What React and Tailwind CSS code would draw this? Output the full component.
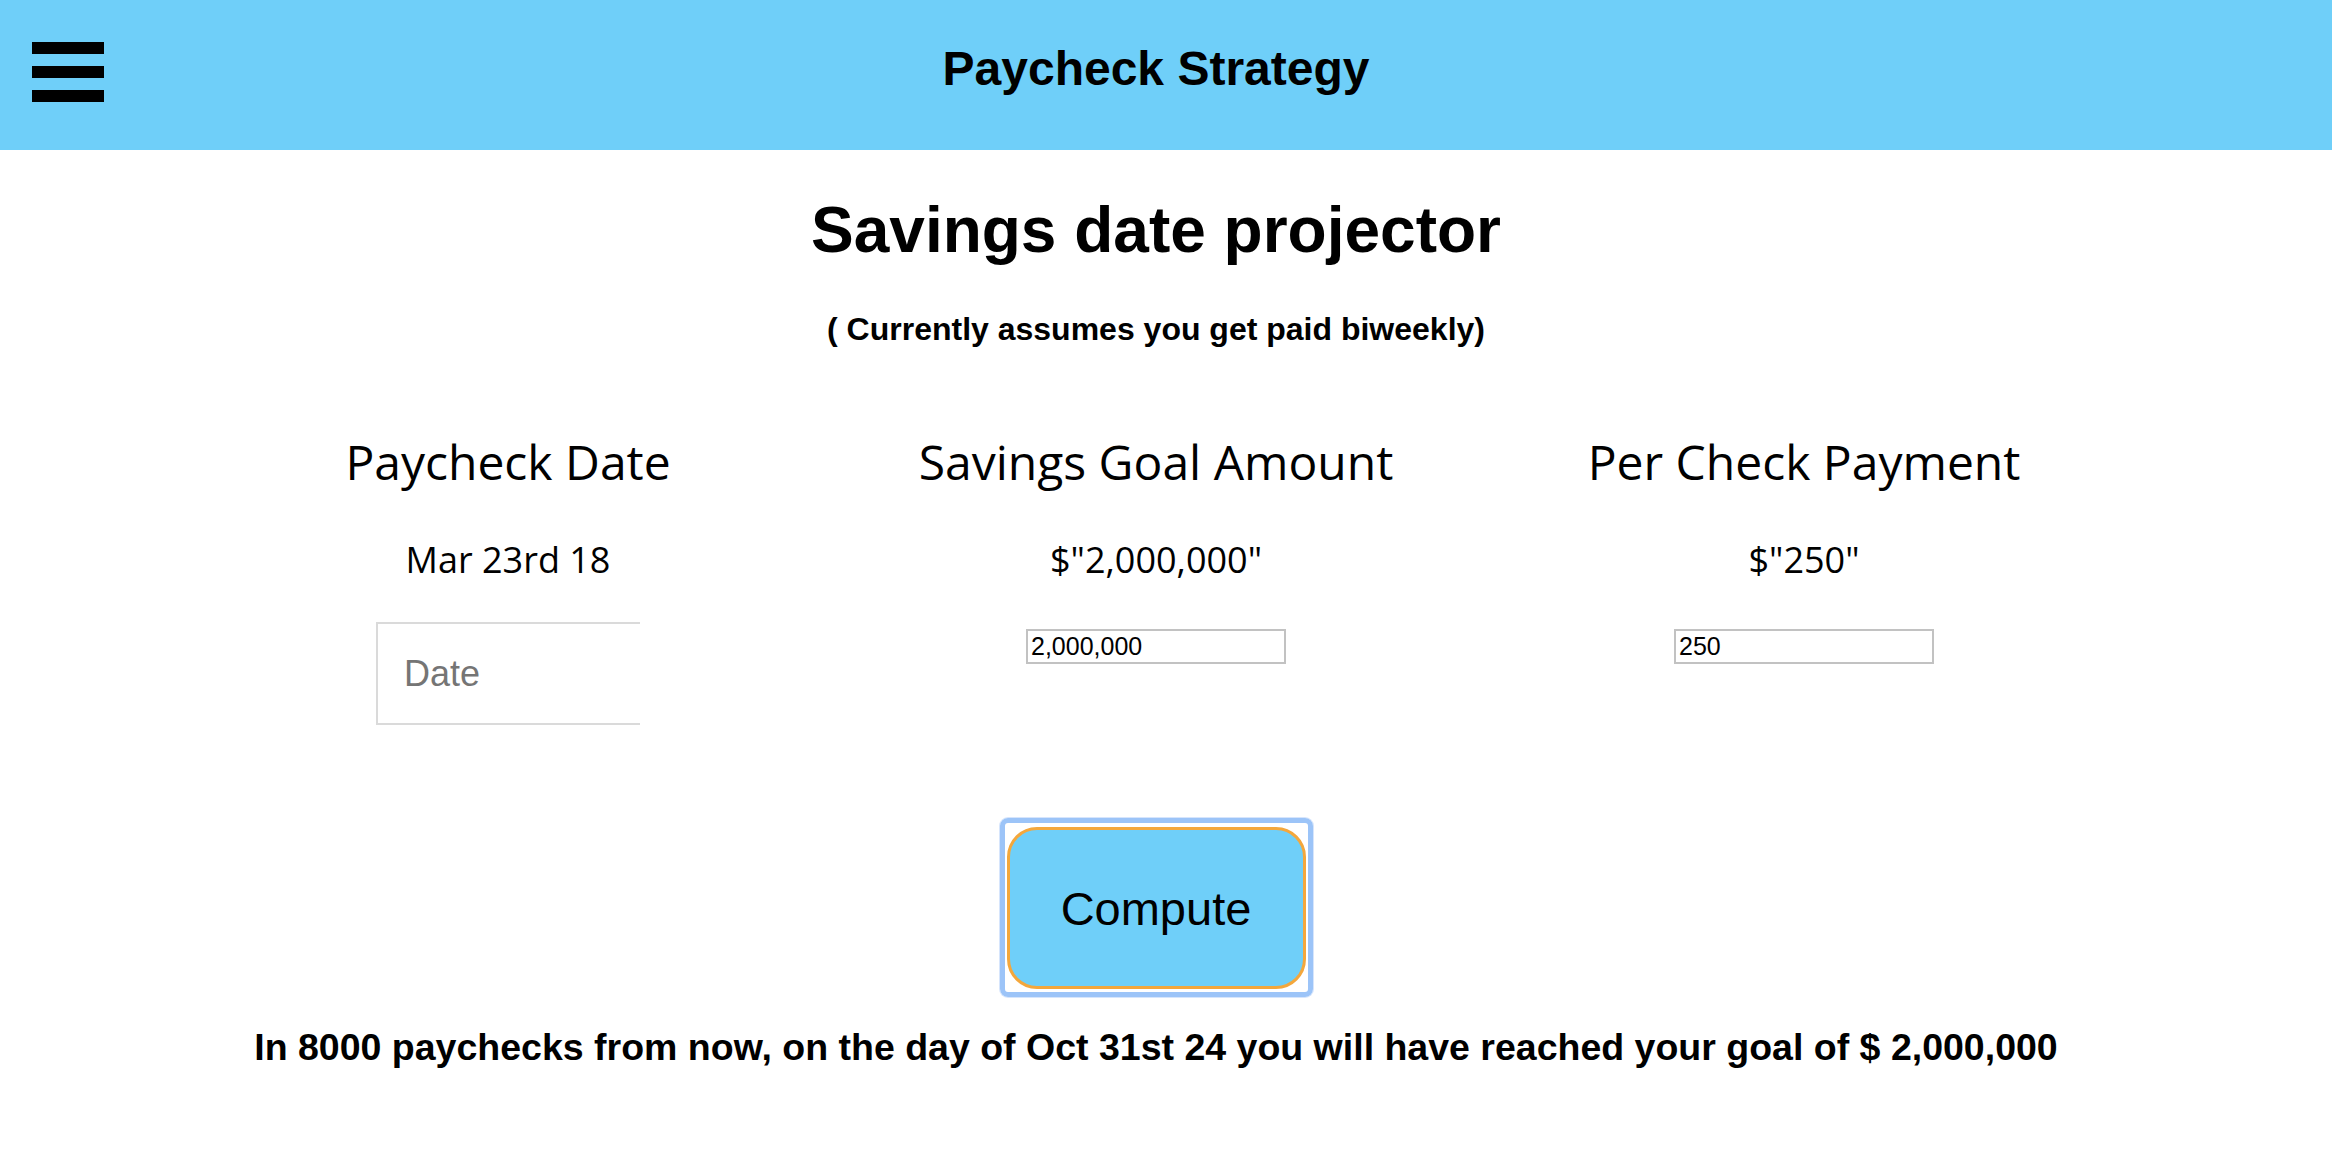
import { useState } from 'react';

const COLUMNS = [
  { key: 'date', title: 'Paycheck Date', value: 'Mar 23rd 18' },
  { key: 'goal', title: 'Savings Goal Amount', value: '$"2,000,000"', input: '2,000,000' },
  { key: 'check', title: 'Per Check Payment', value: '$"250"', input: '250' },
];

const sans = "font-['Liberation_Sans',Arial,Helvetica,sans-serif]";
const open = "font-['Open_Sans','Noto_Sans',sans-serif]";

export default function App() {
  const [goal, setGoal] = useState('2,000,000');
  const [check, setCheck] = useState('250');
  const vals = { goal, check };
  const setters = { goal: setGoal, check: setCheck };

  return (
    <div className={`min-h-screen bg-white text-black ${sans}`}>
      <header className="h-[150px] bg-[#6fcff9]">
        <div className="w-[2312px] grid grid-cols-[1fr_auto_1fr] items-start">
          <div className="pl-[32px] pt-[42px] flex flex-col gap-[12px]">
            <span className="block w-[72px] h-[12px] bg-black" />
            <span className="block w-[72px] h-[12px] bg-black" />
            <span className="block w-[72px] h-[12px] bg-black" />
          </div>
          <h2 className="mt-[45px] text-[48px] leading-[48px] font-bold">Paycheck Strategy</h2>
          <div />
        </div>
      </header>

      <main className="w-[2312px] flex flex-col items-center">
        <h1 className="mt-[48px] text-[64px] leading-[64px] font-bold">Savings date projector</h1>
        <p className="mt-[51px] text-[32px] leading-[32px] font-bold">( Currently assumes you get paid biweekly)</p>

        <div className="mt-[93px] w-[1944px] grid grid-cols-3">
          {COLUMNS.map(c => (
            <div key={c.key} className="flex flex-col items-center">
              <h3 className={`${open} text-[48px] leading-[48px] font-medium`}>{c.title}</h3>
              <div className={`${open} mt-[56px] text-[36px] leading-[36px] font-medium`}>{c.value}</div>
              {c.input === undefined ? (
                <div className="mt-[44px] w-[264px] h-[103px] border-l-2 border-t-2 border-b-2 border-[#dadada] flex items-center pl-[26px]">
                  <input placeholder="Date" className={`${sans} w-full bg-transparent outline-none text-[36px] placeholder:text-[#757575]`} />
                </div>
              ) : (
                <input value={vals[c.key]} onChange={e => setters[c.key](e.target.value)}
                  className={`${sans} mt-[51px] w-[260px] h-[35px] border-2 border-[#c2c2c2] px-[3px] text-[25px] leading-[25px] outline-none`} />
              )}
            </div>
          ))}
        </div>

        <div className="mt-[93px] w-[313px] h-[179px] border-[5px] border-[#9cc4f8] rounded-[8px] shadow-[0_0_0_1px_#d6e5fc] flex items-center justify-center">
          <button className="w-[299px] h-[162px] bg-[#6fcff9] border-[3px] border-[#f4a73c] rounded-[30px] pt-[3px] text-[47px] text-black">
            Compute
          </button>
        </div>

        <p className="mt-[31px] text-[37.5px] leading-[38px] font-bold">
          In 8000 paychecks from now, on the day of Oct 31st 24 you will have reached your goal of $ 2,000,000
        </p>
      </main>
    </div>
  );
}
